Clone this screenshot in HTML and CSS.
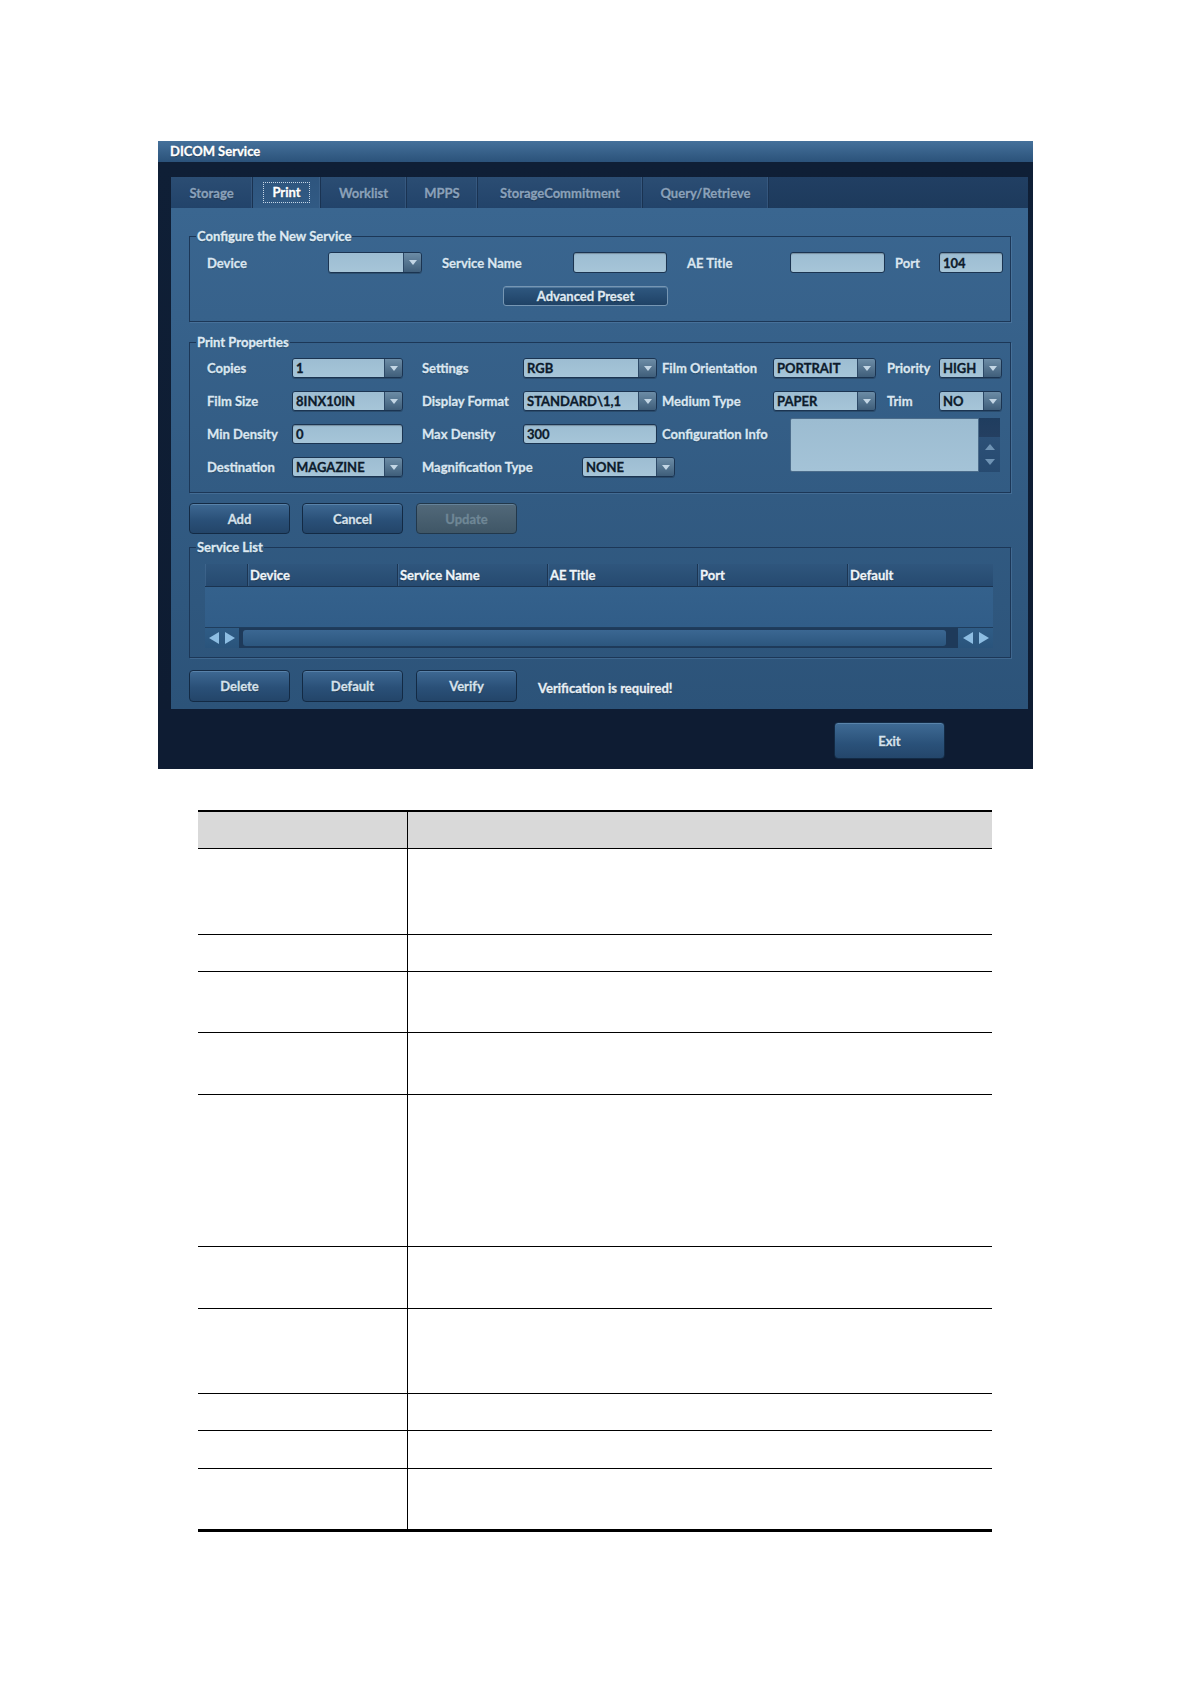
FILE: index.html
```html
<!DOCTYPE html>
<html>
<head>
<meta charset="utf-8">
<title>DICOM Service</title>
<link rel="stylesheet" href="styles.css">
</head>
<body>
<div class="page">
  <div class="dialog">
    <div class="titlebar">DICOM Service</div>
    <div class="frame">
      <div class="tabstrip">
        <div class="tab t-storage">Storage</div>
        <div class="tab active t-print"><span class="focus">Print</span></div>
        <div class="tab t-worklist">Worklist</div>
        <div class="tab t-mpps">MPPS</div>
        <div class="tab t-commit">StorageCommitment</div>
        <div class="tab t-query">Query/Retrieve</div>
      </div>
      <div class="panel">
        <fieldset class="group g-config">
          <legend>Configure the New Service</legend>
          <div class="cfg-row">
            <div class="lbl l-device">Device</div>
            <div class="combo w-device"><div class="val"></div><div class="arr"><svg width="8" height="5" viewBox="0 0 8 5"><path d="M0 0H8L4 5Z" fill="#c3d6e5"/></svg></div></div>
            <div class="lbl l-sname">Service Name</div>
            <div class="field w-sname"></div>
            <div class="lbl l-ae">AE Title</div>
            <div class="field w-ae"></div>
            <div class="lbl l-port">Port</div>
            <div class="field w-port">104</div>
          </div>
          <div class="btn preset">Advanced Preset</div>
        </fieldset>

        <fieldset class="group g-print">
          <legend>Print Properties</legend>
          <div class="props">
            <div class="lbl">Copies</div>
            <div class="combo"><div class="val">1</div><div class="arr"><svg width="8" height="5" viewBox="0 0 8 5"><path d="M0 0H8L4 5Z" fill="#c3d6e5"/></svg></div></div>
            <div class="lbl pl19">Settings</div>
            <div class="combo"><div class="val">RGB</div><div class="arr"><svg width="8" height="5" viewBox="0 0 8 5"><path d="M0 0H8L4 5Z" fill="#c3d6e5"/></svg></div></div>
            <div class="lbl pl5">Film Orientation</div>
            <div class="combo"><div class="val">PORTRAIT</div><div class="arr"><svg width="8" height="5" viewBox="0 0 8 5"><path d="M0 0H8L4 5Z" fill="#c3d6e5"/></svg></div></div>
            <div class="lbl pl11">Priority</div>
            <div class="combo"><div class="val">HIGH</div><div class="arr"><svg width="8" height="5" viewBox="0 0 8 5"><path d="M0 0H8L4 5Z" fill="#c3d6e5"/></svg></div></div>

            <div class="lbl">Film Size</div>
            <div class="combo"><div class="val">8INX10IN</div><div class="arr"><svg width="8" height="5" viewBox="0 0 8 5"><path d="M0 0H8L4 5Z" fill="#c3d6e5"/></svg></div></div>
            <div class="lbl pl19">Display Format</div>
            <div class="combo"><div class="val">STANDARD\1,1</div><div class="arr"><svg width="8" height="5" viewBox="0 0 8 5"><path d="M0 0H8L4 5Z" fill="#c3d6e5"/></svg></div></div>
            <div class="lbl pl5">Medium Type</div>
            <div class="combo"><div class="val">PAPER</div><div class="arr"><svg width="8" height="5" viewBox="0 0 8 5"><path d="M0 0H8L4 5Z" fill="#c3d6e5"/></svg></div></div>
            <div class="lbl pl11">Trim</div>
            <div class="combo"><div class="val">NO</div><div class="arr"><svg width="8" height="5" viewBox="0 0 8 5"><path d="M0 0H8L4 5Z" fill="#c3d6e5"/></svg></div></div>

            <div class="lbl">Min Density</div>
            <div class="field">0</div>
            <div class="lbl pl19">Max Density</div>
            <div class="field">300</div>
            <div class="lbl pl5">Configuration Info</div>
            <div class="textarea">
              <div class="ta-text"></div>
              <div class="ta-scroll">
                <div class="ta-thumb"></div>
                <div class="ta-arrows">
                  <svg width="10" height="6" viewBox="0 0 10 6"><path d="M0 6H10L5 0Z" fill="#6f93b4"/></svg>
                  <svg width="10" height="6" viewBox="0 0 10 6"><path d="M0 0H10L5 6Z" fill="#6f93b4"/></svg>
                </div>
              </div>
            </div>

            <div class="lbl">Destination</div>
            <div class="combo"><div class="val">MAGAZINE</div><div class="arr"><svg width="8" height="5" viewBox="0 0 8 5"><path d="M0 0H8L4 5Z" fill="#c3d6e5"/></svg></div></div>
            <div class="lbl pl19">Magnification Type</div>
            <div class="combo none"><div class="val">NONE</div><div class="arr"><svg width="8" height="5" viewBox="0 0 8 5"><path d="M0 0H8L4 5Z" fill="#c3d6e5"/></svg></div></div>
          </div>
        </fieldset>

        <div class="btn-row top">
          <div class="btn act">Add</div>
          <div class="btn act m12">Cancel</div>
          <div class="btn act disabled m13">Update</div>
        </div>

        <fieldset class="group g-list">
          <legend>Service List</legend>
          <div class="list">
            <div class="list-head">
              <div class="hc c0"></div>
              <div class="hc c1">Device</div>
              <div class="hc c1">Service Name</div>
              <div class="hc c1">AE Title</div>
              <div class="hc c1">Port</div>
              <div class="hc c5">Default</div>
            </div>
            <div class="list-body"></div>
            <div class="hscroll">
              <div class="arrows">
                <svg width="10" height="12" viewBox="0 0 10 12"><path d="M10 0V12L0 6Z" fill="#8dbde2"/></svg>
                <svg width="10" height="12" viewBox="0 0 10 12"><path d="M0 0V12L10 6Z" fill="#8dbde2"/></svg>
              </div>
              <div class="track"></div>
              <div class="arrows right">
                <svg width="10" height="12" viewBox="0 0 10 12"><path d="M10 0V12L0 6Z" fill="#8dbde2"/></svg>
                <svg width="10" height="12" viewBox="0 0 10 12"><path d="M0 0V12L10 6Z" fill="#8dbde2"/></svg>
              </div>
            </div>
          </div>
        </fieldset>

        <div class="btn-row bottom">
          <div class="btn act tall">Delete</div>
          <div class="btn act tall m12">Default</div>
          <div class="btn act tall m13">Verify</div>
          <div class="verify-msg">Verification is required!</div>
        </div>
      </div>
    </div>
    <div class="footer">
      <div class="btn exit">Exit</div>
    </div>
  </div>

  <table class="doc">
    <tr><th class="h-head"></th><th class="h-head"></th></tr>
    <tr><td class="r86"></td><td class="r86"></td></tr>
    <tr><td class="r37"></td><td class="r37"></td></tr>
    <tr><td class="r61"></td><td class="r61"></td></tr>
    <tr><td class="r62"></td><td class="r62"></td></tr>
    <tr><td class="r152"></td><td class="r152"></td></tr>
    <tr><td class="r62"></td><td class="r62"></td></tr>
    <tr><td class="r85"></td><td class="r85"></td></tr>
    <tr><td class="r37"></td><td class="r37"></td></tr>
    <tr><td class="r38"></td><td class="r38"></td></tr>
    <tr class="last"><td class="r63"></td><td class="r63"></td></tr>
  </table>
</div>
</body>
</html>
```

FILE: styles.css
```css
* { box-sizing: border-box; }

body {
  margin: 0;
  background: #ffffff;
  font-family: Lato, "Open Sans", "DejaVu Sans", sans-serif;
}

.page { padding-top: 141px; padding-bottom: 100px; }

/* ---------- dialog ---------- */
.dialog {
  margin-left: 158px;
  width: 875px;
  height: 628px;
  background: #0e1c33;
  display: flex;
  flex-direction: column;
  -webkit-text-stroke: 0.3px currentColor;
}

.titlebar {
  height: 21px;
  background: linear-gradient(#45719b, #2b527a);
  color: #ffffff;
  font-weight: 700;
  font-size: 13px;
  line-height: 21px;
  padding-left: 12px;
  text-shadow: 0 1px 1px rgba(0,0,0,.4);
}

.frame {
  padding: 15px 5px 0 13px;
  background: linear-gradient(#0f1f36, #0e1c32);
}

.tabstrip {
  height: 31px;
  display: flex;
  background: linear-gradient(#213f63, #1d3a5c);
}

.tab {
  height: 31px;
  display: flex;
  align-items: center;
  justify-content: center;
  color: #8aa1ba;
  font-weight: 700;
  font-size: 13px;
  background: linear-gradient(#2b4d73, #22436a);
  border-right: 1px solid #1a3352;
  box-shadow: inset -1px 0 0 rgba(80,115,155,.35);
  text-shadow: 0 1px 1px rgba(0,0,0,.35);
}
.tab.active {
  background: linear-gradient(#2e557e, #315a84);
  color: #ffffff;
}
.tab .focus {
  border: 1px dotted #c6d6e6;
  padding: 2px 8px;
  line-height: 15px;
}
.t-storage { width: 82px; }
.t-print { width: 68px; }
.t-worklist { width: 86px; }
.t-mpps { width: 71px; }
.t-commit { width: 165px; }
.t-query { width: 126px; }

.panel {
  height: 501px;
  background: linear-gradient(#3a6690, #2c5379);
  padding: 20px 17px 0 18px;
}

/* ---------- group boxes ---------- */
.group {
  margin: 0;
  padding: 0;
  width: 822px;
  min-width: 0;
  border: 1px solid #1c3757;
  box-shadow: 1px 1px 0 rgba(120,160,200,.25);
}
.group legend {
  margin-left: 6px;
  padding: 0 1px;
  color: #dde9f3;
  font-weight: 700;
  font-size: 13px;
  line-height: 16px;
  text-shadow: 0 1px 1px rgba(0,0,0,.3);
}

.lbl {
  color: #d9e6f1;
  font-weight: 700;
  font-size: 13px;
  white-space: nowrap;
  display: flex;
  align-items: center;
  text-shadow: 0 1px 1px rgba(0,0,0,.3);
}

.field, .combo .val {
  background: linear-gradient(#9dbdd2, #a6c5d8);
  color: #0d1b2c;
  font-weight: 700;
  font-size: 13px;
  display: flex;
  align-items: center;
  padding-left: 3px;
  white-space: nowrap;
  overflow: hidden;
}
.field {
  border: 1px solid #1b3451;
  border-radius: 3px;
  box-shadow: inset 0 1px 1px rgba(0,0,0,.25);
}
.combo {
  display: flex;
  border: 1px solid #1b3451;
  border-radius: 3px;
  overflow: hidden;
  box-shadow: 0 1px 0 rgba(0,0,0,.2);
}
.combo .val { flex: 1; }
.combo .arr {
  width: 18px;
  flex: none;
  background: linear-gradient(#6c8ca6, #3f5e7a);
  border-left: 1px solid #2c4866;
  display: flex;
  align-items: center;
  justify-content: center;
}

/* configure row */
.g-config { margin-top: 0; padding: 8px 0 15px 0; }
.cfg-row {
  display: flex;
  align-items: stretch;
  height: 21px;
  padding-left: 17px;
}
.l-device { width: 121px; }
.w-device { width: 94px; }
.l-sname { width: 131px; margin-left: 20px; }
.w-sname { width: 94px; }
.l-ae { width: 103px; margin-left: 20px; }
.w-ae { width: 95px; }
.l-port { width: 44px; margin-left: 10px; }
.w-port { width: 64px; }

.btn {
  display: flex;
  align-items: center;
  justify-content: center;
  color: #d5e1ec;
  font-weight: 700;
  font-size: 13px;
  background: linear-gradient(#3e6993, #2a5078 55%, #234569);
  border: 1px solid #132a44;
  border-radius: 4px;
  box-shadow: inset 0 1px 0 rgba(140,180,215,.35);
  text-shadow: 0 1px 1px rgba(0,0,0,.4);
}
.preset {
  margin-top: 13px;
  margin-left: 313px;
  width: 165px;
  height: 20px;
  border: 1px solid #7696b3;
  border-radius: 3px;
  background: linear-gradient(#2f5880, #1f4266);
  color: #dfe9f2;
}

/* print properties */
.g-print { margin-top: 12px; padding: 8px 0 15px 0; }
.props {
  display: grid;
  grid-template-columns: 85px 111px 120px 134px 116px 103px 63px 63px;
  grid-template-rows: repeat(4, 20px);
  row-gap: 13px;
  margin-left: 17px;
}
.pl19 { padding-left: 19px; }
.pl5 { padding-left: 5px; }
.pl11 { padding-left: 11px; }
.combo.none {
  grid-column: 4 / span 2;
  width: 93px;
  margin-left: 59px;
}
.textarea {
  grid-column: 6 / span 3;
  grid-row: 3 / span 2;
  align-self: start;
  margin-top: -6px;
  margin-left: 17px;
  width: 210px;
  height: 54px;
  display: flex;
}
.ta-text {
  flex: 1;
  background: linear-gradient(#9cbcd1, #a4c3d7);
  border: 1px solid #4b6c8b;
  border-radius: 2px 0 0 2px;
}
.ta-scroll {
  width: 21px;
  display: flex;
  flex-direction: column;
  background: #23446a;
}
.ta-thumb { height: 19px; background: linear-gradient(#1f3d5f, #243f61); }
.ta-arrows {
  flex: 1;
  background: linear-gradient(#2c5077, #274a70);
  display: flex;
  flex-direction: column;
  align-items: center;
  justify-content: center;
  gap: 9px;
}

/* buttons rows */
.btn-row { display: flex; }
.btn-row.top { margin-top: 10px; height: 31px; }
.btn-row .act { width: 101px; }
.m12 { margin-left: 12px; }
.m13 { margin-left: 13px; }
.btn.disabled {
  background: linear-gradient(#52697a, #3f5666);
  color: #6f8796;
  border-color: #22384b;
  text-shadow: none;
}
.btn-row.bottom { margin-top: 12px; height: 32px; align-items: stretch; }
.verify-msg {
  margin-left: 21px;
  display: flex;
  align-items: center;
  padding-top: 4px;
  color: #e6eef5;
  font-weight: 700;
  font-size: 13px;
  text-shadow: 0 1px 1px rgba(0,0,0,.35);
}

/* service list */
.g-list { margin-top: 5px; padding: 9px 0 9px 0; }
.list { width: 788px; margin-left: 15px; }
.list-head { display: flex; height: 23px; }
.hc {
  height: 23px;
  background: linear-gradient(#2f567d, #264a70);
  border-right: 1px solid #1b3553;
  border-bottom: 1px solid #1a3350;
  box-shadow: inset 1px 0 0 rgba(90,130,170,.35);
  color: #eef4f9;
  font-weight: 700;
  font-size: 13px;
  display: flex;
  align-items: center;
  padding-left: 2px;
  text-shadow: 0 1px 1px rgba(0,0,0,.35);
}
.hc.c0 { width: 43px; }
.hc.c1 { width: 150px; }
.hc.c5 { width: 145px; border-right: none; }
.list-body {
  height: 41px;
  background: linear-gradient(#34618c, #315d88);
  border-bottom: 1px solid #1f3d5d;
}
.hscroll {
  height: 20px;
  display: flex;
  background: #1e3a5a;
}
.arrows {
  width: 34px;
  background: linear-gradient(#2f5c86, #2a547c);
  display: flex;
  align-items: center;
  justify-content: center;
  gap: 6px;
}
.arrows.right { width: 35px; margin-left: 12px; }
.track {
  margin-left: 4px;
  width: 703px;
  margin-top: 2px;
  margin-bottom: 2px;
  border-radius: 3px;
  background: linear-gradient(#3b6792, #2c567e);
}

/* footer */
.footer {
  height: 60px;
  padding: 13px 0 0 676px;
}
.btn.exit {
  width: 111px;
  height: 37px;
  border-radius: 4px;
  background: linear-gradient(#3f6b95, #2a5179 60%, #24466b);
}

/* ---------- document table ---------- */
.doc {
  margin: 41px 0 0 198px;
  width: 794px;
  border-collapse: separate;
  border-spacing: 0;
  border-top: 2px solid #000;
  table-layout: fixed;
}
.doc th, .doc td {
  padding: 0;
  border-bottom: 1px solid #000;
}
.doc th:first-child, .doc td:first-child {
  width: 210px;
  border-right: 1px solid #000;
}
.doc th { background: #d9d9d9; }
.doc tr.last td { border-bottom: 3px solid #000; }
.h-head { height: 37px; }
.r86 { height: 86px; }
.r37 { height: 37px; }
.r61 { height: 61px; }
.r62 { height: 62px; }
.r152 { height: 152px; }
.r85 { height: 85px; }
.r38 { height: 38px; }
.r63 { height: 63px; }
```
